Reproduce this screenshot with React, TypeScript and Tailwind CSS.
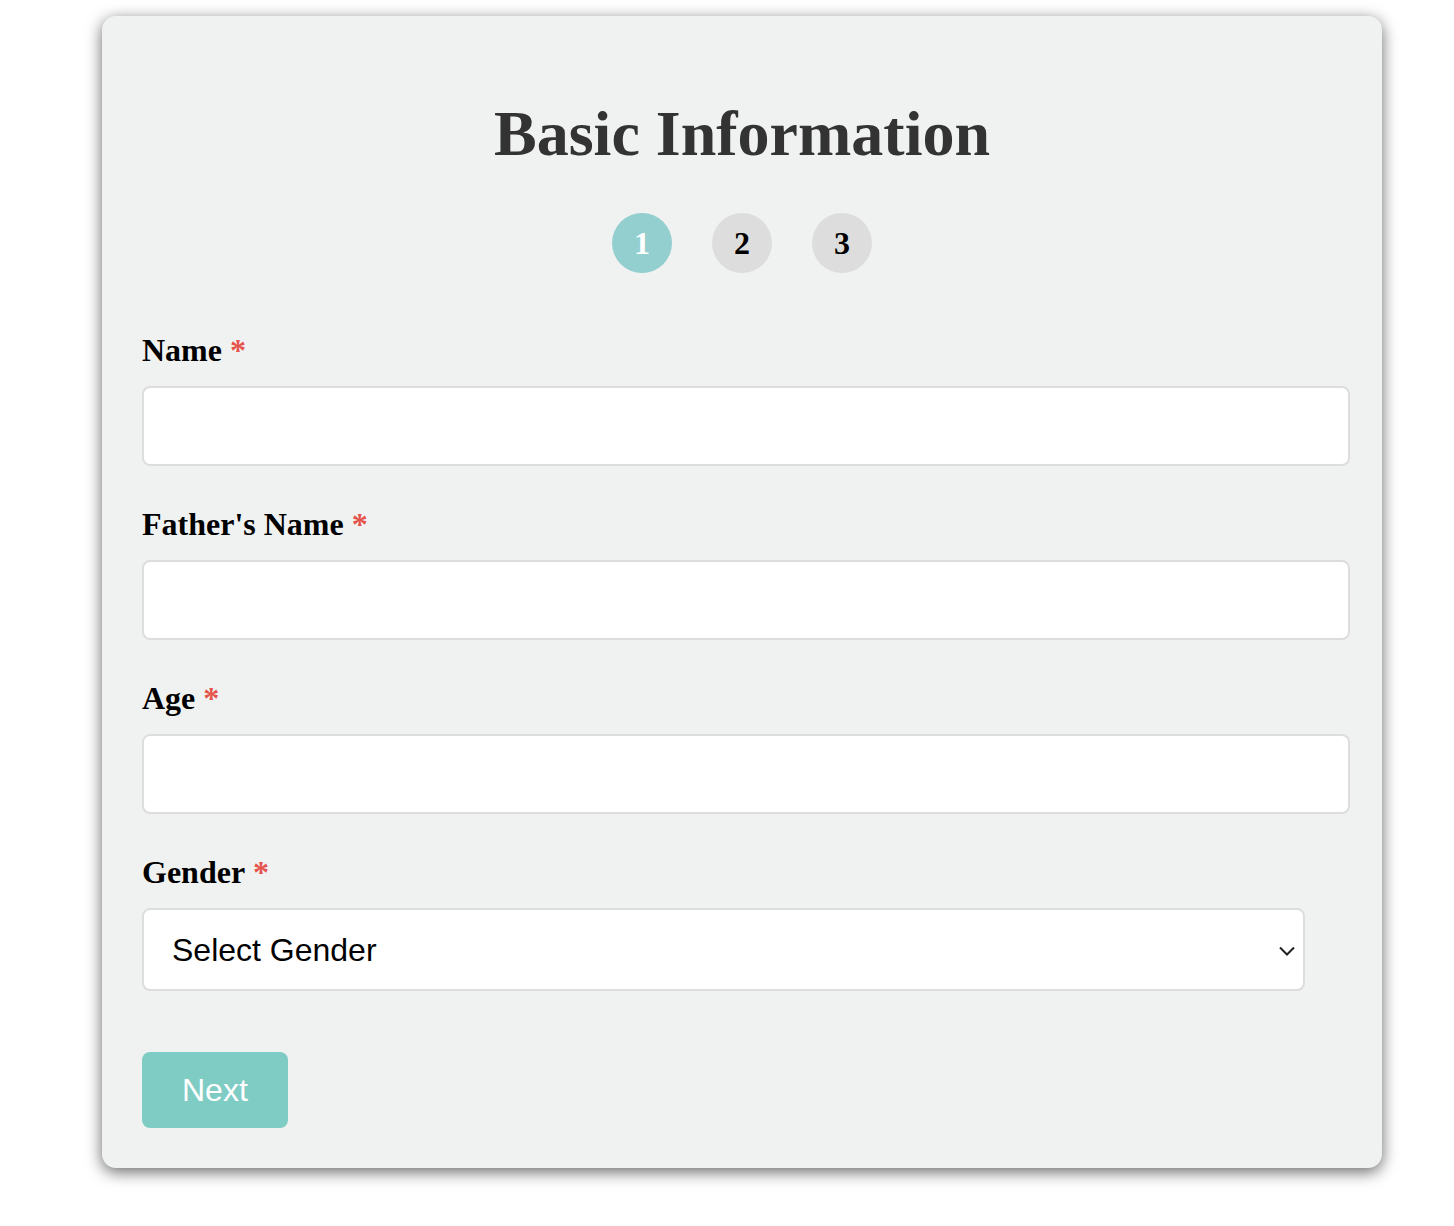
import React from "react"

const fields = ["Name", "Father's Name", "Age"]

function Label({ text }: { text: string }) {
    return (
        <label className="block pt-[3px] mb-[18px] text-[32px] font-bold leading-[35px] text-black">
            {text}
            <span className="ml-[8px] text-[#e5534b]">*</span>
        </label>
    )
}

export default function App() {
    const steps = [1, 2, 3]
    return (
        <div className="min-h-[1226px] bg-white pt-[16px] pl-[102px] font-['Liberation_Serif','Times_New_Roman',serif]">
            <div className="w-[1280px] rounded-[14px] bg-[#f0f2f1] px-[40px] pt-[82px] pb-[40px] shadow-[0_4px_16px_rgba(0,0,0,0.6)]">
                <h1 className="text-center text-[64px] font-bold leading-[71px] text-[#333333]">Basic Information</h1>

                <div className="mt-[44px] flex justify-center gap-[40px]">
                    {steps.map(s => (
                        <div
                            key={s}
                            className={
                                s === 1
                                    ? "flex h-[60px] w-[60px] items-center justify-center rounded-full bg-[#92cfce] text-[32px] font-bold text-white"
                                    : "flex h-[60px] w-[60px] items-center justify-center rounded-full bg-[#dddddd] text-[32px] font-bold text-black"
                            }
                        >
                            {s}
                        </div>
                    ))}
                </div>

                <div className="mt-[57px]">
                    {fields.map(f => (
                        <div key={f} className="mb-[38px]">
                            <Label text={f} />
                            <input className="block h-[80px] w-[1208px] rounded-[8px] border-2 border-[#dddddd] bg-white px-[28px] text-[32px] outline-none" />
                        </div>
                    ))}

                    <div>
                        <Label text="Gender" />
                        <div className="relative h-[83px] w-[1163px] rounded-[8px] border-2 border-[#dddddd] bg-white">
                            <div className="flex h-full items-center pl-[28px] font-['Liberation_Sans',Arial,sans-serif] text-[32px] text-black">
                                Select Gender
                            </div>
                            <svg
                                className="absolute right-[7px] top-[35px]"
                                width="18"
                                height="12"
                                viewBox="0 0 18 12"
                                fill="none"
                                stroke="#222"
                                strokeWidth="2"
                            >
                                <path d="M2 2.5 L9 9.5 L16 2.5" />
                            </svg>
                        </div>
                    </div>

                    <button className="mt-[61px] flex h-[76px] items-center rounded-[8px] bg-[#7fccc5] px-[40px] font-['Liberation_Sans',Arial,sans-serif] text-[32px] text-white">
                        Next
                    </button>
                </div>
            </div>
        </div>
    )
}
